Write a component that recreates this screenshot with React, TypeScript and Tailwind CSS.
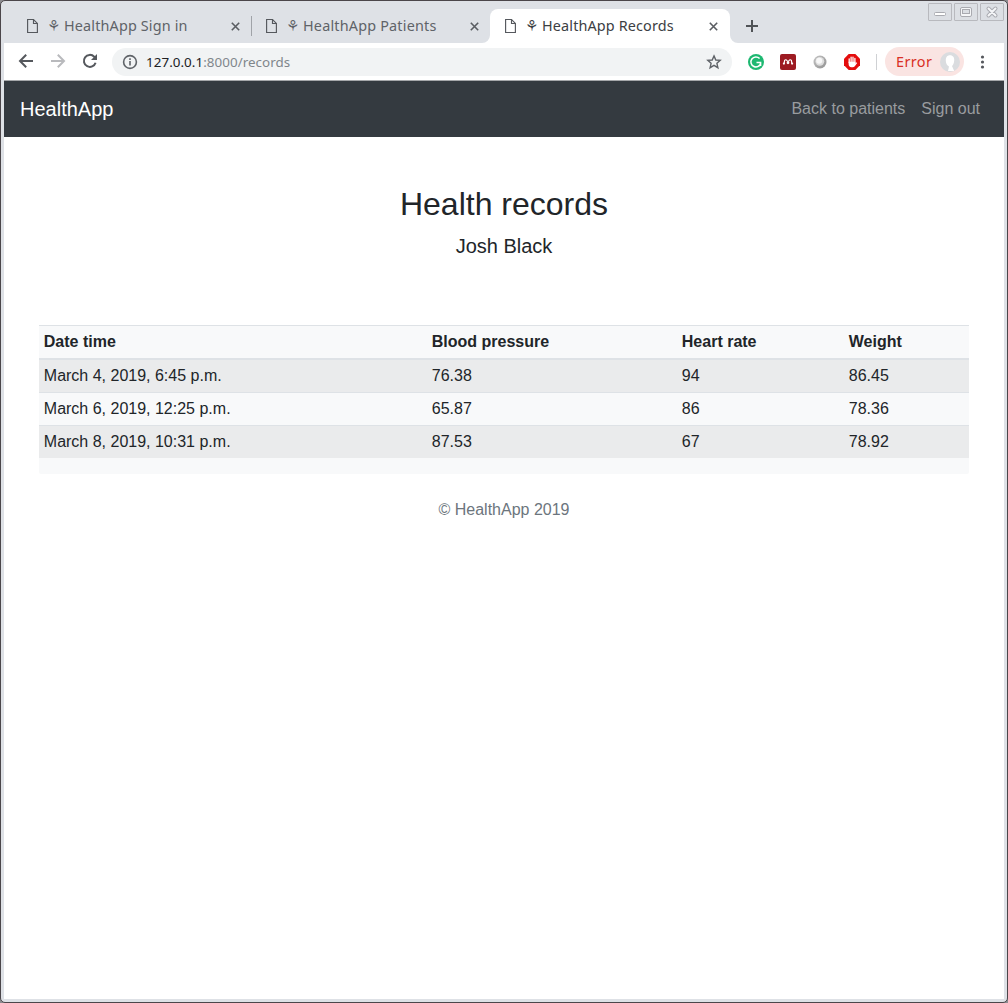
import React from "react";

function PageIcon() {
  return (
    <svg width="11" height="16" viewBox="0 0 11 16" fill="none" stroke="#55585d" strokeWidth="1.15" className="shrink-0">
      <path d="M0.6 1.5H6.5L10.4 5.4V14.5H0.6Z" />
      <path d="M6.5 1.5V5.5H10.4" />
    </svg>
  );
}

function CloseIcon() {
  return (
    <svg width="9" height="9" viewBox="0 0 9 9" stroke="#5a5d62" strokeWidth="1.6" className="shrink-0">
      <path d="M0.8 0.8L8.2 8.2M8.2 0.8L0.8 8.2" />
    </svg>
  );
}

function Tab({ title, spacing, active = false }: { title: string; spacing: string; active?: boolean }) {
  return (
    <div className={`relative flex h-[34px] items-center ${active ? "w-[240px] rounded-t-[8px] bg-white pl-[15px] text-[#3c4043]" : "w-[239px] pl-[15px] text-[#5f6368]"}`}>
      {active && (
        <>
          <svg className="absolute bottom-0 -left-[8px]" width="8" height="8"><path d="M8 0V8H0A8 8 0 0 0 8 0Z" fill="#fff" /></svg>
          <svg className="absolute -right-[8px] bottom-0" width="8" height="8"><path d="M0 0V8H8A8 8 0 0 1 0 0Z" fill="#fff" /></svg>
        </>
      )}
      <PageIcon />
      <span className="ml-[10px] flex w-[12px] justify-center font-['DejaVu_Sans'] text-[15px] leading-5">⚘</span>
      <span className={`ml-[4px] w-[167px] font-['Noto_Sans',sans-serif] text-[14.4px] leading-5 whitespace-nowrap ${spacing}`}>{title}</span>
      <CloseIcon />
    </div>
  );
}

function WindowControls() {
  return (
    <div className="absolute top-px right-0 flex gap-[2px]">
      {["min", "max", "close"].map((kind) => (
        <div key={kind} className="flex h-[18px] w-[24px] items-center justify-center rounded-[1px] border border-[#b8b9be] bg-[#dcdfe4]">
          <svg width="14" height="14" viewBox="0 0 14 14" fill="none">
            {kind === "min" && <rect x="1.5" y="7.5" width="11" height="3" rx="1" fill="#fff" stroke="#a9aab0" />}
            {kind === "max" && (
              <>
                <rect x="1.5" y="2.5" width="11" height="9" rx="1.5" fill="#f5f6f8" stroke="#a9aab0" />
                <rect x="3.5" y="4.5" width="7" height="4" fill="#dcdfe4" stroke="#a9aab0" />
              </>
            )}
            {kind === "close" && (
              <>
                <path d="M3.5 3.5L10.5 10.5M10.5 3.5L3.5 10.5" stroke="#a9aab0" strokeWidth="4" strokeLinecap="round" />
                <path d="M3.5 3.5L10.5 10.5M10.5 3.5L3.5 10.5" stroke="#f5f6f8" strokeWidth="2" strokeLinecap="round" />
              </>
            )}
          </svg>
        </div>
      ))}
    </div>
  );
}

function TabStrip() {
  return (
    <div className="relative flex h-[41px] shrink-0 items-end bg-[#dee1e6] pl-[8px]">
      <Tab title="HealthApp Sign in" spacing="tracking-[0.15px]" />
      <div className="mb-[7px] h-[20px] w-px bg-[#a0a3a8]" />
      <div className="-mr-px -ml-px w-[240px]">
        <Tab title="HealthApp Patients" spacing="tracking-[0.19px]" />
      </div>
      <Tab title="HealthApp Records" spacing="tracking-[0.14px]" active />
      <svg className="mb-[11px] ml-[16px]" width="12" height="12" stroke="#505357" strokeWidth="2"><path d="M6 0V12M0 6H12" /></svg>
      <WindowControls />
    </div>
  );
}

function Extensions() {
  return (
    <div className="ml-[16px] flex items-center gap-[16px]">
      <svg width="16" height="16" viewBox="0 0 16 16">
        <circle cx="8" cy="8" r="8" fill="#1db871" />
        <path d="M11.6 4.6A5 5 0 1 0 12.8 9M8.5 8.6H12.6V12" fill="none" stroke="#fff" strokeWidth="1.5" />
      </svg>
      <svg width="16" height="16" viewBox="0 0 16 16">
        <rect width="16" height="16" rx="2" fill="#9d1b22" />
        <path d="M4.2 9.2L4.6 6.4Q5.8 5 7 6.6L8 7.6L9 6.6Q10.2 5 11.4 6.4L11.8 9.2" fill="none" stroke="#fff" strokeWidth="1.2" />
        <circle cx="3.9" cy="9.6" r="1.1" fill="#fff" />
        <circle cx="8" cy="8.8" r="1.4" fill="#fff" />
        <circle cx="12.1" cy="9.6" r="1.1" fill="#fff" />
      </svg>
      <svg width="16" height="16" viewBox="0 0 16 16">
        <defs>
          <linearGradient id="ring" x1="0" y1="0" x2="1" y2="1"><stop stopColor="#c4c4c4" /><stop offset="1" stopColor="#929292" /></linearGradient>
        </defs>
        <circle cx="8" cy="8" r="6.5" fill="url(#ring)" />
        <circle cx="7.8" cy="7.3" r="4.4" fill="#dedede" />
        <circle cx="7.2" cy="6.7" r="3" fill="#f8f8f8" />
      </svg>
      <svg width="16" height="16" viewBox="0 0 16 16">
        <path d="M4.7 0H11.3L16 4.7V11.3L11.3 16H4.7L0 11.3V4.7Z" fill="#e40d0d" />
        <path d="M5.2 8.5V4.8M7.1 8V3.2M9 8V3.2M10.9 8.5V4.4" stroke="#fff" strokeWidth="1.3" strokeLinecap="round" />
        <path d="M4.6 7.8H11.5V9.4L12.6 8.2L13.2 8.9L10.8 12.3Q10 13.3 8.6 13.3H7.5Q4.6 13 4.6 9.8Z" fill="#fff" />
      </svg>
    </div>
  );
}

function Toolbar() {
  return (
    <div className="flex h-[38px] shrink-0 items-center border-b border-[#a5a7aa] bg-white pl-[14px]">
      <svg className="-mt-px" width="16" height="16" viewBox="0 0 16 16" fill="none" stroke="#55585d" strokeWidth="2"><path d="M15 8H2.5M8.2 1.8L2 8L8.2 14.2" /></svg>
      <svg className="-mt-px ml-[16px]" width="16" height="16" viewBox="0 0 16 16" fill="none" stroke="#b9babd" strokeWidth="2"><path d="M1 8H13.5M7.8 1.8L14 8L7.8 14.2" /></svg>
      <svg className="-mt-px ml-[16px]" width="16" height="16" viewBox="0 0 16 16" fill="none" stroke="#55585d" strokeWidth="2">
        <path d="M13.6 9.7A6 6 0 1 1 12.2 3.7L13.2 4.8" />
        <path d="M15 1V7H9Z" fill="#55585d" stroke="none" />
      </svg>
      <div className="ml-[14px] flex h-[28px] w-[620px] items-center rounded-full bg-[#f1f3f4] pl-[10px]">
        <svg width="16" height="16" viewBox="0 0 16 16" fill="none" stroke="#5f6368" strokeWidth="1.6">
          <circle cx="8" cy="8" r="6.4" /><path d="M8 7V11.6M8 4.2V5.9" />
        </svg>
        <div className="ml-[8px] w-[560px] font-['Noto_Sans',sans-serif] text-[13.4px] leading-5 tracking-[0.05px] text-[#80868b]">
          <span className="text-[#202124]">127.0.0.1</span>:8000/records
        </div>
        <svg width="16" height="16" viewBox="0 0 16 16" fill="none" stroke="#5f6368" strokeWidth="1.4">
          <path d="M8 1.9L9.8 6L14.2 6.4L10.9 9.3L11.9 13.7L8 11.4L4.1 13.7L5.1 9.3L1.8 6.4L6.2 6Z" />
        </svg>
      </div>
      <Extensions />
      <div className="ml-[16px] h-[16px] w-px bg-[#cfd1d4]" />
      <div className="ml-[8px] flex h-[29px] w-[79px] items-center rounded-full bg-[#fae4e2] pl-[11px]">
        <span className="w-[44px] font-['Noto_Sans',sans-serif] text-[14.4px] leading-5 tracking-[0.4px] text-[#d93025]">Error</span>
        <svg width="20" height="20" viewBox="0 0 20 20">
          <circle cx="10" cy="10" r="10" fill="#dadcdf" />
          <path d="M10 3.2C13 3.2 14.5 5.5 14.2 8.6C14 11.5 13 13.2 12 14L14.2 19H8L9 14.5C7 13.5 5.8 11.5 5.8 8.5C5.8 5.4 7 3.2 10 3.2Z" fill="#fff" />
        </svg>
      </div>
      <svg className="ml-[16px]" width="5" height="14" viewBox="0 0 5 14" fill="#55585d"><circle cx="2.5" cy="2" r="1.6" /><circle cx="2.5" cy="7" r="1.6" /><circle cx="2.5" cy="12" r="1.6" /></svg>
    </div>
  );
}

const records = [
  ["March 4, 2019, 6:45 p.m.", "76.38", "94", "86.45"],
  ["March 6, 2019, 12:25 p.m.", "65.87", "86", "78.36"],
  ["March 8, 2019, 10:31 p.m.", "87.53", "67", "78.92"],
];

function RecordsTable() {
  return (
    <div className="mx-[35px] mt-[64px] rounded-[2px] bg-[#f8f9fa] pb-[16px]">
      <table className="w-full table-fixed border-separate border-spacing-0 text-left">
        <colgroup><col className="w-[388px]" /><col className="w-[250px]" /><col className="w-[167px]" /><col /></colgroup>
        <thead>
          <tr>
            {["Date time", "Blood pressure", "Heart rate", "Weight"].map((h) => (
              <th key={h} className="h-[35px] border-t border-b-2 border-[#dee2e6] p-0 pl-[4.8px] leading-6 font-bold">{h}</th>
            ))}
          </tr>
        </thead>
        <tbody>
          {records.map((row, r) => (
            <tr key={row[0]} className="odd:bg-[#eaebec]">
              {row.map((cell) => (
                <td key={cell} className={`p-0 pl-[4.8px] leading-6 ${r === 0 ? "h-[32px]" : "h-[33px] border-t border-[#dee2e6]"}`}>{cell}</td>
              ))}
            </tr>
          ))}
        </tbody>
      </table>
    </div>
  );
}

export default function App() {
  return (
    <div className="h-[1003px] w-[1008px] bg-[#8d8c90]">
      <div className="flex h-full flex-col rounded-[5px] border border-[#4b464a] bg-[#dee1e6] px-[3px] pt-px pb-[3px]">
        <TabStrip />
        <Toolbar />
        <div className="flex-1 bg-white font-['Liberation_Sans',sans-serif] text-[16px] text-[#212529]">
          <nav className="flex h-[56px] items-center justify-between bg-[#343a40] pr-[24px] pl-[16px]">
            <span className="text-[20px] leading-[30px] text-white">HealthApp</span>
            <div className="flex gap-4 leading-6 text-[#999c9f]"><span>Back to patients</span><span>Sign out</span></div>
          </nav>
          <h1 className="mt-[48px] text-center text-[32px] leading-[38px]">Health records</h1>
          <p className="mt-[8px] text-center text-[20px] leading-[30px]">Josh Black</p>
          <RecordsTable />
          <footer className="mt-[24px] text-center leading-6 text-[#6c757d]">© HealthApp 2019</footer>
        </div>
      </div>
    </div>
  );
}
